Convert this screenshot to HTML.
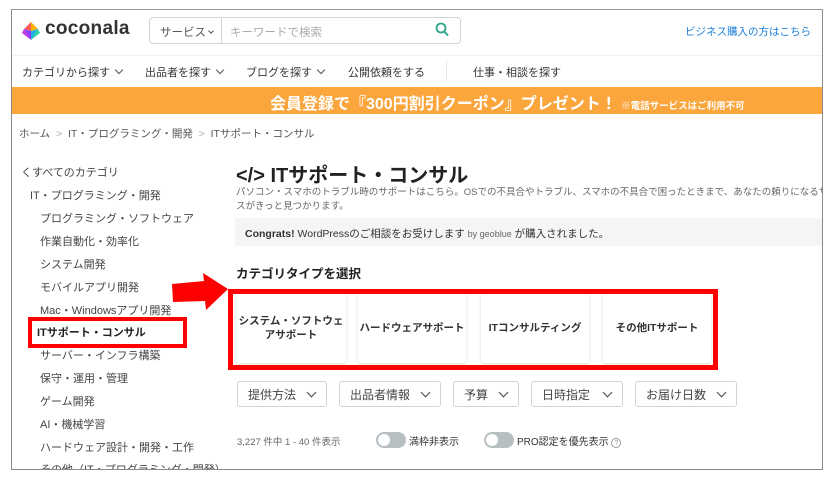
<!DOCTYPE html>
<html><head><meta charset="utf-8"><style>
*{margin:0;padding:0;box-sizing:border-box}
body{width:834px;height:484px;background:#fff;font-family:"Liberation Sans","Noto Sans CJK JP",sans-serif;color:#333;position:relative;overflow:hidden}
.a{position:absolute;white-space:nowrap}
.frame{position:absolute;left:11px;top:9px;width:812px;height:461px;border:1px solid #8a8a8a;border-top-color:#999;overflow:hidden}
.side{font-size:11px;color:#444}
.card{position:absolute;top:293px;height:70px;background:#fff;border-radius:3px;box-shadow:0 1px 3px rgba(0,0,0,.15);font-size:10.5px;font-weight:bold;color:#333;display:flex;align-items:center;justify-content:center;text-align:center;line-height:1.35}
.btn{position:absolute;top:381px;height:26px;border:1px solid #cfd4d8;border-radius:3px;font-size:12px;color:#444;display:flex;align-items:center;padding-left:10px}
.btn:after{content:"";width:6px;height:6px;border-right:1.6px solid #444;border-bottom:1.6px solid #444;transform:rotate(45deg);position:absolute;right:11px;top:7px}
.tog{position:absolute;width:30px;height:16px;border-radius:8px;background:#b8bfc3}
.tog:after{content:"";position:absolute;left:2px;top:2px;width:12px;height:12px;border-radius:6px;background:#fff}
.chev{display:inline-block;width:6px;height:6px;border-right:1.5px solid #555;border-bottom:1.5px solid #555;transform:rotate(45deg);margin-left:6px;position:relative;top:-3px}
</style></head><body>
<div class="frame"></div>
<svg class="a" style="left:21px;top:21px" width="20" height="20" viewBox="0 0 20 20">
<path d="M10 1 L3 8 L10 10Z" fill="#ff5a5a"/><path d="M10 1 L17 8 L10 10Z" fill="#ffb300"/>
<path d="M3 8 L10 19 L10 10Z" fill="#8a3ffc"/><path d="M17 8 L10 19 L10 10Z" fill="#20b0e0"/>
<path d="M3 8 L1 12 L10 19Z" fill="#c03ae0"/><path d="M17 8 L19 12 L10 19Z" fill="#2bd1a0"/></svg>
<div class="a" style="left:45px;top:18px;font-size:19px;font-weight:bold;color:#333;letter-spacing:0.3px">coconala</div>
<div class="a" style="left:149px;top:17px;width:312px;height:27px;border:1px solid #cfd4d8;border-radius:4px"></div>
<div class="a" style="left:221px;top:18px;width:1px;height:25px;background:#cfd4d8"></div>
<div class="a" style="left:160px;top:24px;font-size:11.5px;color:#555">サービス<span class="chev" style="width:4px;height:4px;margin-left:3px"></span></div>
<div class="a" style="left:230px;top:24px;font-size:11.5px;color:#aaa">キーワードで検索</div>
<svg class="a" style="left:435px;top:22px" width="14" height="15" viewBox="0 0 14 15"><circle cx="6" cy="6" r="4.5" fill="none" stroke="#2aa588" stroke-width="1.8"/><path d="M9.3 9.5 L13 13.5" stroke="#2aa588" stroke-width="2"/></svg>
<div class="a" style="left:685px;top:24px;font-size:10.5px;color:#1e80d8">ビジネス購入の方はこちら</div>
<div class="a" style="left:12px;top:55px;width:810px;height:1px;background:#f0f0f0"></div>
<div class="a" style="left:22px;top:64px;font-size:11px;color:#333">カテゴリから探す<span class="chev"></span></div>
<div class="a" style="left:145px;top:64px;font-size:11px;color:#333">出品者を探す<span class="chev"></span></div>
<div class="a" style="left:246px;top:64px;font-size:11px;color:#333">ブログを探す<span class="chev"></span></div>
<div class="a" style="left:348px;top:64px;font-size:11px;color:#333">公開依頼をする</div>
<div class="a" style="left:446px;top:61px;width:1px;height:20px;background:#e5e5e5"></div>
<div class="a" style="left:473px;top:64px;font-size:11px;color:#333">仕事・相談を探す</div>
<div class="a" style="left:12px;top:87px;width:810px;height:27px;background:#fba53d"></div>
<div class="a" style="left:270px;top:90px;font-size:16px;font-weight:bold;color:#fff">会員登録で『300円割引クーポン』プレゼント！ <span style="font-size:9.5px">※電話サービスはご利用不可</span></div>
<div class="a" style="left:19px;top:126px;font-size:10.5px;color:#555">ホーム <span style="color:#aaa">&nbsp;&gt;&nbsp;</span> IT・プログラミング・開発 <span style="color:#aaa">&nbsp;&gt;&nbsp;</span> ITサポート・コンサル</div>
<div class="a side" style="left:21px;top:164px">くすべてのカテゴリ</div>
<div class="a side" style="left:30px;top:187px">IT・プログラミング・開発</div>
<div class="a side" style="left:40px;top:210px">プログラミング・ソフトウェア</div>
<div class="a side" style="left:40px;top:233px">作業自動化・効率化</div>
<div class="a side" style="left:40px;top:256px">システム開発</div>
<div class="a side" style="left:40px;top:279px">モバイルアプリ開発</div>
<div class="a side" style="left:40px;top:302px">Mac・Windowsアプリ開発</div>
<div class="a side" style="left:37px;top:324px;font-weight:bold;color:#222">ITサポート・コンサル</div>
<div class="a side" style="left:40px;top:347px">サーバー・インフラ構築</div>
<div class="a side" style="left:40px;top:370px">保守・運用・管理</div>
<div class="a side" style="left:40px;top:393px">ゲーム開発</div>
<div class="a side" style="left:40px;top:416px">AI・機械学習</div>
<div class="a side" style="left:40px;top:439px">ハードウェア設計・開発・工作</div>
<div class="a side" style="left:40px;top:461px;height:8px;overflow:hidden">その他（IT・プログラミング・開発）</div>
<div class="a" style="left:28px;top:317px;width:159px;height:31px;border:4px solid #f00"></div>
<div class="a" style="left:236px;top:159px;font-size:20px;font-weight:bold;color:#222">&lt;/&gt; ITサポート・コンサル</div>
<div class="a" style="left:236px;top:186px;width:586px;overflow:hidden;font-size:9.5px;color:#666;line-height:14px">パソコン・スマホのトラブル時のサポートはこちら。OSでの不具合やトラブル、スマホの不具合で困ったときまで、あなたの頼りになるサービスが集<br>スがきっと見つかります。</div>
<div class="a" style="left:235px;top:218px;width:587px;height:28px;background:#f5f5f5"></div>
<div class="a" style="left:245px;top:226px;font-size:10.5px;color:#333"><b>Congrats!</b> WordPressのご相談をお受けします <span style="font-size:9px;color:#666">by geoblue</span> が購入されました。</div>
<div class="a" style="left:236px;top:263px;font-size:12.5px;font-weight:bold;color:#222">カテゴリタイプを選択</div>
<div class="card" style="left:236px;width:110px">システム・ソフトウェ<br>アサポート</div>
<div class="card" style="left:358px;width:108px">ハードウェアサポート</div>
<div class="card" style="left:481px;width:108px">ITコンサルティング</div>
<div class="card" style="left:603px;width:108px">その他ITサポート</div>
<div class="a" style="left:228px;top:289px;width:490px;height:81px;border:5px solid #f00"></div>
<svg class="a" style="left:170px;top:270px" width="60" height="44" viewBox="0 0 60 44"><path d="M2 14 L34 11 L33 3 L58 19 L36 40 L35 31 L3 32Z" fill="#f00"/></svg>
<div class="btn" style="left:237px;width:90px">提供方法</div>
<div class="btn" style="left:339px;width:102px">出品者情報</div>
<div class="btn" style="left:453px;width:66px">予算</div>
<div class="btn" style="left:531px;width:92px">日時指定</div>
<div class="btn" style="left:635px;width:102px">お届け日数</div>
<div class="a" style="left:237px;top:434px;font-size:9.5px;color:#666">3,227 件中 1 - 40 件表示</div>
<div class="tog" style="left:376px;top:432px"></div>
<div class="a" style="left:409px;top:433px;font-size:10px;color:#333">満枠非表示</div>
<div class="tog" style="left:484px;top:432px"></div>
<div class="a" style="left:517px;top:433px;font-size:10px;color:#333">PRO認定を優先表示 <span style="display:inline-block;width:10px;height:10px;border:1px solid #999;border-radius:50%;font-size:7px;text-align:center;line-height:9px;color:#999">?</span></div>
</body></html>
